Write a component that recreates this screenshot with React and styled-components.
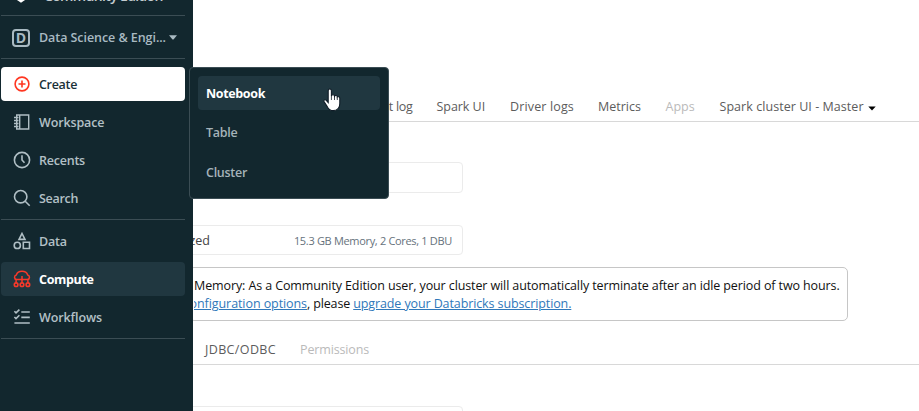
import React from 'react';
import styled, { createGlobalStyle, css } from 'styled-components';

const GlobalStyle = createGlobalStyle`
  * { box-sizing: border-box; }
  body { margin: 0; background: #fff; overflow: hidden; }
`;

const Page = styled.div`
  position: relative;
  display: flex;
  width: 919px;
  height: 411px;
  overflow: hidden;
  font: 400 12.5px/18px "Open Sans", "Noto Sans", sans-serif;
  color: #11171c;
`;

const Sidebar = styled.nav`
  flex: none;
  display: flex;
  flex-direction: column;
  width: 193px;
  padding: 0 8px 0 1px;
  background: #12272e;
  color: #b3c0c6;
`;

const Brand = styled.div`
  flex: none;
  display: flex;
  align-items: flex-end;
  height: 15px;
  padding: 0 0 0 14px;
  gap: 17px;
  overflow: hidden;
  color: #c3ccd0;
  svg { flex: none; margin-bottom: 12px; }
`;

const BrandName = styled.span`
  height: 28px;
  font-size: 14px;
  font-weight: 600;
  line-height: 18px;
  letter-spacing: -0.65px;
`;

const Divider = styled.hr`
  flex: none;
  width: 100%;
  height: 1px;
  margin: 0;
  border: 0;
  background: #3b4d54;
`;

const Text = styled.span`
  white-space: nowrap;
  letter-spacing: ${p => p.$track || 0}px;
`;

const Persona = styled.div`
  flex: none;
  display: flex;
  align-items: center;
  height: 42px;
  padding: 1px 8px 0 11px;
  font-weight: 600;
  color: #a9bac2;
  > span + span { padding-top: 1px; }
  > svg { margin-left: 3px; }
`;

const PersonaBadge = styled.span`
  flex: none;
  display: grid;
  place-items: center;
  width: 18px;
  height: 18px;
  margin-right: 9px;
  border: 2px solid #a9bac2;
  border-radius: 4px;
  font-size: 14px;
  font-weight: 700;
  line-height: 14px;
`;

const NavList = styled.div`
  display: flex;
  flex-direction: column;
  gap: 4px;
  padding: ${p => p.$top}px 0 4px;
`;

const NavItem = styled.a`
  display: flex;
  align-items: center;
  gap: 8px;
  height: 34px;
  padding: 0 12px;
  border-radius: 4px;
  font-weight: 600;
  svg { color: #b0bfc5; }
  span { padding-top: 2px; }
  ${p => p.$kind === 'create' && css`
    background: #fff;
    color: #1b3139;
    svg { color: #ff3621; }
  `}
  ${p => p.$kind === 'active' && css`
    background: #203740;
    color: #fff;
    font-weight: 700;
    svg { color: #f8392a; }
  `}
`;

const Flyout = styled.div`
  position: absolute;
  left: 189px;
  top: 67px;
  display: flex;
  flex-direction: column;
  gap: 5.5px;
  width: 200px;
  height: 132px;
  padding: 8px;
  border: 1px solid #3b4d54;
  border-radius: 4px;
  background: #12272e;
`;

const FlyoutItem = styled.a`
  display: flex;
  align-items: center;
  height: 34px;
  padding: 1px 8px 0;
  border-radius: 4px;
  font-weight: ${p => (p.$hover ? 700 : 600)};
  color: ${p => (p.$hover ? '#fff' : '#a5b3b9')};
  background: ${p => (p.$hover ? '#203740' : 'transparent')};
`;

const Pointer = styled.svg`
  position: absolute;
  left: 322px;
  top: 87px;
`;

const Main = styled.main`
  flex: 1;
  min-width: 0;
  display: flex;
  flex-direction: column;
  overflow: hidden;
`;

const Tabs = styled.div`
  flex: none;
  display: flex;
  align-items: flex-end;
  height: ${p => p.$height}px;
  padding: 0 0 5px ${p => p.$left}px;
  border-bottom: 1px solid #d8d8d8;
`;

const Tab = styled.a`
  flex: none;
  display: flex;
  align-items: center;
  justify-content: ${p => (p.$end ? 'flex-end' : 'flex-start')};
  width: ${p => p.$width}px;
  margin-right: ${p => p.$gap || 0}px;
  color: ${p => (p.$disabled ? '#bababa' : '#5c5c5c')};
  svg { margin: 2px 0 0 4px; }
`;

const Field = styled.div`
  flex: none;
  display: flex;
  align-items: center;
  justify-content: space-between;
  width: 274px;
  height: ${p => p.$height || 31}px;
  margin: ${p => p.$top}px 0 0 -4px;
  padding: 2px 10px 0 0;
  border: 1px solid #ebebeb;
  border-radius: 4px;
`;

const FieldValue = styled.span`
  display: flex;
  justify-content: flex-end;
  width: 20px;
  color: #444;
`;

const FieldNote = styled.span`
  font-size: 11px;
  letter-spacing: -0.32px;
  white-space: nowrap;
  color: #66727c;
`;

const Notice = styled.div`
  flex: none;
  display: flex;
  flex-direction: column;
  justify-content: center;
  width: 659px;
  height: 54px;
  margin: 12px 0 0 -4px;
  padding: 2px 0 0 4px;
  border: 1px solid #c6c6c6;
  border-radius: 5px;
`;

const Line = styled.div`
  display: flex;
  color: #111;
`;

const Clip = styled.span`
  display: flex;
  justify-content: flex-end;
  width: 113px;
  overflow: hidden;
`;

const Link = styled.a`
  flex: none;
  color: #2f78ba;
  white-space: nowrap;
  text-decoration: underline;
  text-decoration-thickness: 1px;
  text-underline-offset: 1px;
  letter-spacing: ${p => p.$track}px;
`;

const Svg = ({ children }) => (
  <svg width="18" height="18" viewBox="0 0 18 18" fill="none" stroke="currentColor" strokeWidth="1.6">{children}</svg>
);

const PlusIcon = () => <Svg><circle cx="9" cy="9" r="6.9" /><path d="M9 5.5v7M5.5 9h7" /></Svg>;
const NotebookIcon = () => (
  <Svg><path d="M3.7 2h12v14h-12zM6.7 2v14M1 4.5h4.5M1 7.5h4.5M1 10.5h4.5M1 13.5h4.5" strokeWidth="1.4" /></Svg>
);
const ClockIcon = () => <Svg><circle cx="9" cy="9" r="7.6" /><path d="M9 4.2V9l2.5 2.7" /></Svg>;
const SearchIcon = () => <Svg><circle cx="7.7" cy="7.7" r="6.2" /><path d="m12.2 12.2 4.5 4.5" /></Svg>;
const ShapesIcon = () => (
  <Svg><path d="M9 1.5 12 7.4H6zM10.3 10.3h6.2v6.2h-6.2z" /><circle cx="4.3" cy="13.4" r="3.1" /></Svg>
);
const ComputeIcon = () => (
  <Svg>
    <path d="M4 9.6H3.6a2.4 2.4 0 0 1-.3-4.7C4.2 2.3 6.4 1.2 9 1.2s4.8 1.1 5.7 3.7a2.4 2.4 0 0 1-.3 4.7H3.1v3.2M9 6v6.8M14.9 9.6v3.2" strokeWidth="1.5" />
    <circle cx="3.1" cy="14.7" r="1.8" /><circle cx="9" cy="14.7" r="1.8" /><circle cx="14.9" cy="14.7" r="1.8" />
  </Svg>
);
const ChecklistIcon = () => (
  <Svg><path d="m1.4 3.3 1.6 1.6 3.4-3.3M1.4 9l1.6 1.6 3.4-3.3M8.3 4h8.5M8.3 9.4h8.5M1.4 15h15.4" /></Svg>
);
const Caret = () => (
  <svg width="8" height="5" viewBox="0 0 8 5"><path d="M0 .2h8L4.5 4.6h-1z" fill="currentColor" /></svg>
);
const MasterCaret = () => (
  <svg width="8" height="5" viewBox="0 0 8 5"><path d="M.3.6h7.4L4 4.5z" fill="#000" /></svg>
);

const browse = [
  { label: 'Create', track: -0.3, Icon: PlusIcon, kind: 'create' },
  { label: 'Workspace', track: -0.13, Icon: NotebookIcon },
  { label: 'Recents', track: -0.23, Icon: ClockIcon },
  { label: 'Search', track: -0.3, Icon: SearchIcon },
];
const assets = [
  { label: 'Data', track: -0.2, Icon: ShapesIcon },
  { label: 'Compute', track: -0.34, Icon: ComputeIcon, kind: 'active' },
  { label: 'Workflows', track: -0.1, Icon: ChecklistIcon },
];

const Nav = ({ items, top }) => (
  <NavList $top={top}>
    {items.map(({ label, track, Icon, kind }) => (
      <NavItem key={label} $kind={kind}><Icon /><Text $track={track}>{label}</Text></NavItem>
    ))}
  </NavList>
);

export default function App() {
  return (
    <Page>
      <GlobalStyle />
      <Sidebar>
        <Brand>
          <svg width="12" height="12" viewBox="0 0 12 12"><path d="M1 7l5 3.4L11 7" fill="none" stroke="#fff" strokeWidth="2.2" /></svg>
          <BrandName>Community Edition</BrandName>
        </Brand>
        <Divider />
        <Persona>
          <PersonaBadge>D</PersonaBadge>
          <Text $track={-0.06}>Data Science &amp; Engi...</Text>
          <Caret />
        </Persona>
        <Divider />
        <Nav items={browse} top={8} />
        <Divider />
        <Nav items={assets} top={4} />
        <Divider />
      </Sidebar>
      <Main>
        <Tabs $height={122} $left={0}>
          <Tab $width={219.5} $gap={24} $end><Text $track={-0.3}>Event log</Text></Tab>
          <Tab $width={73.5}><Text $track={-0.05}>Spark UI</Text></Tab>
          <Tab $width={88}><Text $track={0.14}>Driver logs</Text></Tab>
          <Tab $width={67.5}><Text>Metrics</Text></Tab>
          <Tab $width={54} $disabled><Text>Apps</Text></Tab>
          <Tab $width={160}><Text $track={0.05}>Spark cluster UI - Master</Text><MasterCaret /></Tab>
        </Tabs>
        <Field $top={40} />
        <Field $top={32} $height={30}>
          <FieldValue><Text>Memory Optimized</Text></FieldValue>
          <FieldNote>15.3 GB Memory, 2 Cores, 1 DBU</FieldNote>
        </Field>
        <Notice>
          <Line>
            <Text $track={-0.11}>Memory: As a Community Edition user, your cluster will automatically terminate after an idle period of two hours.</Text>
          </Line>
          <Line>
            <Clip><Link $track={-0.08}>configuration options</Link></Clip>
            <Text $track={-0.14}>,&nbsp;please&nbsp;</Text>
            <Link $track={-0.11}>upgrade your Databricks subscription.</Link>
          </Line>
        </Notice>
        <Tabs $height={44} $left={12}>
          <Tab $width={95}><Text $track={0.37}>JDBC/ODBC</Text></Tab>
          <Tab $width={80} $disabled><Text $track={-0.14}>Permissions</Text></Tab>
        </Tabs>
        <Field $top={41} />
      </Main>
      <Flyout>
        <FlyoutItem $hover><Text $track={-0.35}>Notebook</Text></FlyoutItem>
        <FlyoutItem><Text $track={-0.25}>Table</Text></FlyoutItem>
        <FlyoutItem><Text $track={-0.28}>Cluster</Text></FlyoutItem>
      </Flyout>
      <Pointer width="20" height="26" viewBox="0 0 20 26">
        <path d="M6.2 15.5V3.7Q6.3 2 7.8 2t1.6 1.7V9q.4-1.3 1.7-1.2 1.3 0 1.4 1.4.5-.9 1.6-.7 1.2.2 1.2 1.5.5-.6 1.4-.3 1.1.3 1.1 1.5v5.2c0 4-2.4 7.2-6.7 7.2-3 0-4.5-1.5-5.7-3.7L2 14.5c-.5-1.5 1.2-2.4 2.3-1.2z" fill="#fff" stroke="#101c27" strokeWidth="1.1" />
        <path d="M9.4 8.8V13M12.5 9.2V13M15.3 10.2V13" stroke="#101c27" strokeWidth="0.8" />
      </Pointer>
    </Page>
  );
}
